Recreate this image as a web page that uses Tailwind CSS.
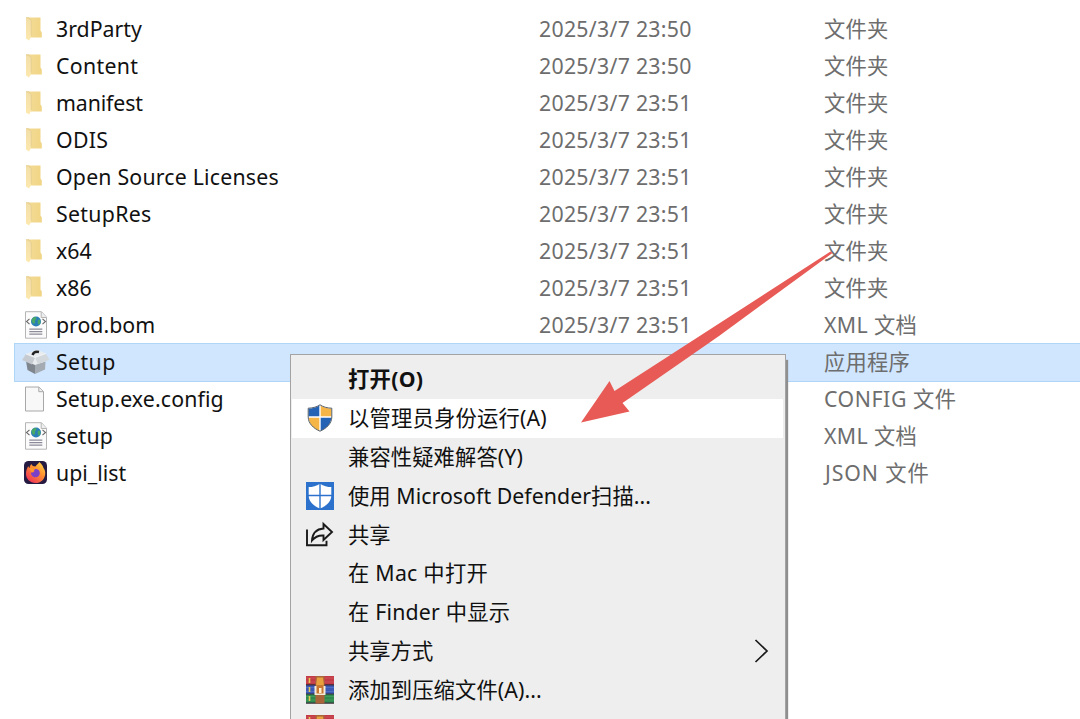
<!DOCTYPE html>
<html lang="zh-CN">
<head>
  <meta charset="UTF-8" />
  <meta name="viewport" content="width=device-width, initial-scale=1.0" />
  <title>Setup</title>
  <script src="https://cdn.jsdelivr.net/npm/@tailwindcss/browser@4"></script>
  <style>
    body {
      font-family: 'Noto Sans', 'Noto Sans CJK SC', sans-serif;
    }
  </style>
</head>
<body class="relative w-[1080px] h-[719px] overflow-hidden bg-white text-[21.3px] leading-[36px] text-[#111] whitespace-nowrap">

  <!-- shared icons -->
  <svg class="absolute size-0">
    <linearGradient id="gFolder" x1="0" x2="1"><stop offset="0" stop-color="#f3dc98" /><stop offset="1" stop-color="#f1d585" /></linearGradient>
    <linearGradient id="gFlap" x1="0" x2="0" y1="0" y2="1"><stop offset="0" stop-color="#f2dea8" /><stop offset="1" stop-color="#fde9ae" /></linearGradient>
    <linearGradient id="gFox" x1="1" x2="0.2" y1="0" y2="1"><stop offset="0" stop-color="#ffe14d" /><stop offset="0.45" stop-color="#ff9130" /><stop offset="1" stop-color="#f0305a" /></linearGradient>
    <symbol id="folder" viewBox="0 0 28 28">
      <path d="M4 2.500h14.500v13l1.300 2v5H6z" fill="url(#gFolder)" />
      <path d="M4 3l5 2.500v16.500l-2 3.500-3-2z" fill="url(#gFlap)" />
      <path d="M4 2.800h3l2.200 2.800v15" fill="none" stroke="#e3cb92" stroke-width=".8" />
    </symbol>
    <symbol id="xml" viewBox="0 0 28 28">
      <path d="M3.500.700h16l5 5.500v21h-21z" fill="#fbfbfb" stroke="#b5b5b5" />
      <path d="M19.200.900v5.600h5.300" fill="#eee" stroke="#b5b5b5" />
      <circle cx="14" cy="10.500" r="5" fill="#2b7fb8" />
      <path d="M10 8c2-3 4-2 4.500-1s-2 2-1.500 3.500-1 3-2 2-2-3-1-4.500zM16.500 8.500c1.500-.5 2 1 2 2.500s-1.500 3-2 2.500-1.500-4 0-5z" fill="#48a868" />
      <path d="M7.500 7.800l-3 2.700 3 2.700M20.500 7.800l3 2.700-3 2.700" fill="none" stroke="#666" stroke-width="1.100" />
      <path d="M7.300 18.200h13M7.300 20.700h13M7.300 23.200h13" stroke="#8d8b99" stroke-width="1.200" />
    </symbol>
    <symbol id="blank" viewBox="0 0 28 28">
      <path d="M3.500 2h13.500l4.500 4.500v19.500h-18z" fill="#f8f8f8" stroke="#a8a8a8" />
      <path d="M16.800 2.200v4.500h4.500" fill="#eee" stroke="#a8a8a8" />
    </symbol>
    <symbol id="box" viewBox="0 0 28 28">
      <path d="M4 13l9 3.500v9.500l-7.500-4z" fill="#7f868e" />
      <path d="M13 16.500l10.500-3-.5 8-10 4.500z" fill="#a4abb3" />
      <path d="M4 6l11-4.500 9 4-1 8-10 3.500-8.500-4z" fill="#e8ecef" />
      <path d="M4 6l9 3.500-3 7L0 12z" fill="#c5cbd1" />
      <path d="M24 5.500l3.500 6.500-11.500 4-3-6.500z" fill="#d3d8dd" />
      <path d="M4 6l9 3.500 11-4" fill="none" stroke="#f5f7f8" stroke-width=".8" />
      <path d="M10.500 7c1-2.800 3.300-3.800 6.500-3" fill="none" stroke="#222" stroke-width="2.400" />
    </symbol>
    <symbol id="firefox" viewBox="0 0 28 28">
      <rect x="2" y="2" width="23" height="23" rx="4.500" fill="#251b42" />
      <path d="M13.500 7.500c1-2 3-2.500 3.800-4.500 3 2.500 3.500 4 4.200 6 2 2.500 2.300 6 1 9-1.600 4-5 6-9 6-5.500 0-9.700-4.300-9.500-9.500 0-3 1-5 2.300-7.500.3 1.200.700 1.600 1.200 2 .300-1.800 1-3 2-4 .300 1.500 1.500 2.500 4 2.500z" fill="url(#gFox)" />
      <path d="M10.500 11c2-1.500 5-1.500 6.500.500 1.700 2.500.500 6.500-3.200 6.800-3.300 0-5-2.300-4.800-5 .500.300 1.500.300 2.200 0 1.200-.500 1.500-1 .800-1.500z" fill="#7a41c8" />
      <path d="M7.500 9.500c1.500-.800 4-.500 5.500 1.500-1 .200-1.800 1.500-3.500 2.500z" fill="#ff9a2b" />
    </symbol>
    <symbol id="rar" viewBox="0 0 28 28">
      <rect width="28" height="9.500" fill="#c23b47" />
      <rect y="9" width="28" height="9.500" fill="#3c59b5" />
      <rect y="18" width="28" height="9" fill="#2f8a50" />
      <path d="M0 2h28M0 6h28" stroke="#d0565e" stroke-width=".8" />
      <path d="M0 11.500h28M0 15.500h28" stroke="#5472c8" stroke-width=".8" />
      <path d="M0 20.500h28M0 24h28" stroke="#46a060" stroke-width=".8" />
      <path d="M0 8.800h28M0 18h28M0 27.200h28" stroke="#3a2c38" stroke-width="1.200" />
      <path d="M3.500 2v5M3.500 11v5M3.500 20v5" stroke="#e8c84c" stroke-width="1.600" />
      <rect x="9.500" width="9" height="27.500" fill="#a9643a" />
      <path d="M11 1.500h6l1 8h-8z" fill="#e8a13d" />
      <path d="M8.500 10h11v9h-11z" fill="#f3ead8" />
      <path d="M10.500 9.500h7v8h-7z" fill="#c9752f" />
      <path d="M13 12h2.500v5H13z" fill="#fff0cf" />
    </symbol>
  </svg>

  <!-- file list -->
  <main class="pl-[14px] pt-[11px]">
    <div class="flex h-[37px] items-center pb-[2px]"><svg class="ml-2 mr-[6px] size-7"><use href="#folder" /></svg><span class="w-[483px]">3rdParty</span><span class="w-[285px] text-[#6d6d6d] tracking-[.27px]">2025/3/7 23:50</span><span class="text-[#6d6d6d] tracking-[.2px]">文件夹</span></div>
    <div class="flex h-[37px] items-center pb-[2px]"><svg class="ml-2 mr-[6px] size-7"><use href="#folder" /></svg><span class="w-[483px] tracking-[.3px]">Content</span><span class="w-[285px] text-[#6d6d6d] tracking-[.27px]">2025/3/7 23:50</span><span class="text-[#6d6d6d] tracking-[.2px]">文件夹</span></div>
    <div class="flex h-[37px] items-center pb-[2px]"><svg class="ml-2 mr-[6px] size-7"><use href="#folder" /></svg><span class="w-[483px] tracking-[-.1px]">manifest</span><span class="w-[285px] text-[#6d6d6d] tracking-[.27px]">2025/3/7 23:51</span><span class="text-[#6d6d6d] tracking-[.2px]">文件夹</span></div>
    <div class="flex h-[37px] items-center pb-[2px]"><svg class="ml-2 mr-[6px] size-7"><use href="#folder" /></svg><span class="w-[483px] tracking-[.3px]">ODIS</span><span class="w-[285px] text-[#6d6d6d] tracking-[.27px]">2025/3/7 23:51</span><span class="text-[#6d6d6d] tracking-[.2px]">文件夹</span></div>
    <div class="flex h-[37px] items-center pb-[2px]"><svg class="ml-2 mr-[6px] size-7"><use href="#folder" /></svg><span class="w-[483px] tracking-[.2px]">Open Source Licenses</span><span class="w-[285px] text-[#6d6d6d] tracking-[.27px]">2025/3/7 23:51</span><span class="text-[#6d6d6d] tracking-[.2px]">文件夹</span></div>
    <div class="flex h-[37px] items-center pb-[2px]"><svg class="ml-2 mr-[6px] size-7"><use href="#folder" /></svg><span class="w-[483px] tracking-[.3px]">SetupRes</span><span class="w-[285px] text-[#6d6d6d] tracking-[.27px]">2025/3/7 23:51</span><span class="text-[#6d6d6d] tracking-[.2px]">文件夹</span></div>
    <div class="flex h-[37px] items-center pb-[2px]"><svg class="ml-2 mr-[6px] size-7"><use href="#folder" /></svg><span class="w-[483px]">x64</span><span class="w-[285px] text-[#6d6d6d] tracking-[.27px]">2025/3/7 23:51</span><span class="text-[#6d6d6d] tracking-[.2px]">文件夹</span></div>
    <div class="flex h-[37px] items-center pb-[2px]"><svg class="ml-2 mr-[6px] size-7"><use href="#folder" /></svg><span class="w-[483px]">x86</span><span class="w-[285px] text-[#6d6d6d] tracking-[.27px]">2025/3/7 23:51</span><span class="text-[#6d6d6d] tracking-[.2px]">文件夹</span></div>
    <div class="flex h-[37px] items-center pb-[2px]"><svg class="ml-2 mr-[6px] size-7"><use href="#xml" /></svg><span class="w-[483px]">prod.bom</span><span class="w-[285px] text-[#6d6d6d] tracking-[.27px]">2025/3/7 23:51</span><span class="text-[#6d6d6d] tracking-[.35px]">XML 文档</span></div>
    <div class="flex h-[39px] -my-px items-center pb-[2px] bg-[#d0e6fe] border border-r-0 border-[#b0d6f7]"><svg class="ml-[7px] mr-[6px] size-7"><use href="#box" /></svg><span class="w-[483px] tracking-[.4px]">Setup</span><span class="w-[285px] text-[#6d6d6d] tracking-[.27px]">2025/3/7 23:51</span><span class="text-[#6d6d6d] tracking-[.2px]">应用程序</span></div>
    <div class="flex h-[37px] items-center pb-[2px]"><svg class="ml-2 mr-[6px] size-7"><use href="#blank" /></svg><span class="w-[483px] tracking-[.13px]">Setup.exe.config</span><span class="w-[285px]"></span><span class="text-[#6d6d6d] tracking-[.55px]">CONFIG 文件</span></div>
    <div class="flex h-[37px] items-center pb-[2px]"><svg class="ml-2 mr-[6px] size-7"><use href="#xml" /></svg><span class="w-[483px] tracking-[.2px]">setup</span><span class="w-[285px]"></span><span class="text-[#6d6d6d] tracking-[.35px]">XML 文档</span></div>
    <div class="flex h-[37px] items-center pb-[2px]"><svg class="ml-2 mr-[6px] size-7"><use href="#firefox" /></svg><span class="w-[483px]">upi_list</span><span class="w-[285px]"></span><span class="pl-px text-[#6d6d6d] tracking-[.9px]">JSON 文件</span></div>
  </main>

  <!-- context menu -->
  <div class="absolute left-[290px] top-[354px] h-[400px] w-[496px] border border-[#a3a3a3] bg-[#eee] px-px pt-[5px] shadow-[2px_6px_1px_#8f8f8f]">
    <div class="flex h-[38.8px] items-center pl-[56px] font-bold tracking-[.3px]">打开(O)</div>
    <div class="flex h-[38.8px] items-center bg-white mr-px">
      <svg class="ml-[14px] mr-[14px] size-7" viewBox="0 0 28 28">
        <path d="M14 .5C10.500 3 6 4 2 4v9c0 6.500 5 11.500 12 14.500 7-3 12-8 12-14.500V4c-4 0-8.500-1-12-3.500z" fill="#fff" />
        <path d="M13.300 1.500C10 3.700 6 4.600 2.500 4.600v7.700h10.800z" fill="#2362b4" />
        <path d="M14.700 1.500c3.300 2.200 7.300 3.100 10.800 3.100v7.700H14.700z" fill="#f5b547" />
        <path d="M2.600 13.700h10.700v13C7 24 3 19.500 2.600 13.700z" fill="#f5b547" />
        <path d="M25.400 13.700H14.700v13c6.300-2.700 10.300-7.200 10.700-13z" fill="#2362b4" />
        <path d="M14 .8C10.500 3.200 6 4.200 2.200 4.200V13c0 6.300 5 11.200 11.800 14.200C20.800 24.200 25.800 19.300 25.800 13V4.200C22 4.200 17.500 3.200 14 .8z" fill="none" stroke="#56606b" stroke-width="1" />
      </svg>
      <span class="tracking-[.2px]">以管理员身份运行(A)</span>
    </div>
    <div class="flex h-[38.8px] items-center pl-[56px] tracking-[.1px]">兼容性疑难解答(Y)</div>
    <div class="flex h-[38.8px] items-center">
      <svg class="ml-[14px] mr-[14px] size-7" viewBox="0 0 28 28">
        <rect width="28" height="28" fill="#2c72cd" />
        <path d="M14 1.800c-3.500 2.500-7.500 3.300-11.300 3.300v8.400c0 6 4.600 10.300 11.300 13 6.700-2.700 11.300-7 11.300-13V5.100C21.500 5.100 17.500 4.300 14 1.800z" fill="#fff" />
        <path d="M14 1v26M2 13.500h24" stroke="#2c72cd" stroke-width="1.400" />
      </svg>
      <span class="tracking-[.05px]">使用 Microsoft Defender扫描...</span>
    </div>
    <div class="flex h-[38.8px] items-center">
      <svg class="ml-[14px] mr-[14px] size-7" viewBox="0 0 28 28" fill="none" stroke="#1a1a1a" stroke-width="1.900">
        <path d="M1 8.500v15.700h19.500v-4.500" />
        <path d="M17.500 3l8.500 8-8.500 8v-4.500c-5-.3-8.500 1.200-11.500 5 .5-7 4.500-11.500 11.500-12z" />
      </svg>
      <span>共享</span>
    </div>
    <div class="flex h-[38.8px] items-center pl-[56px] tracking-[.25px]">在 Mac 中打开</div>
    <div class="flex h-[38.8px] items-center pl-[56px] tracking-[.2px]">在 Finder 中显示</div>
    <div class="flex h-[38.8px] items-center justify-between pl-[56px] pr-[15px]">
      <span>共享方式</span>
      <svg class="h-[26px] w-[15px]" viewBox="0 0 15 26" fill="none" stroke="#1a1a1a" stroke-width="1.700"><path d="M1.500 2l11.500 11-11.500 11" /></svg>
    </div>
    <div class="flex h-[38.8px] items-center"><svg class="ml-[14px] mr-[14px] size-7"><use href="#rar" /></svg><span class="tracking-[.1px]">添加到压缩文件(A)...</span></div>
    <div class="flex h-[38.8px] items-center"><svg class="ml-[14px] mr-[14px] size-7"><use href="#rar" /></svg></div>
  </div>

  <!-- red arrow -->
  <svg class="absolute left-[570px] top-[240px] h-[190px] w-[270px]" viewBox="570 240 270 190">
    <path d="M830.500 251.500L614.500 391 609.500 381 581 422.500 629.500 411.500 622.500 403 719 336 832.500 253z" fill="#e85a55" />
  </svg>
</body>
</html>
